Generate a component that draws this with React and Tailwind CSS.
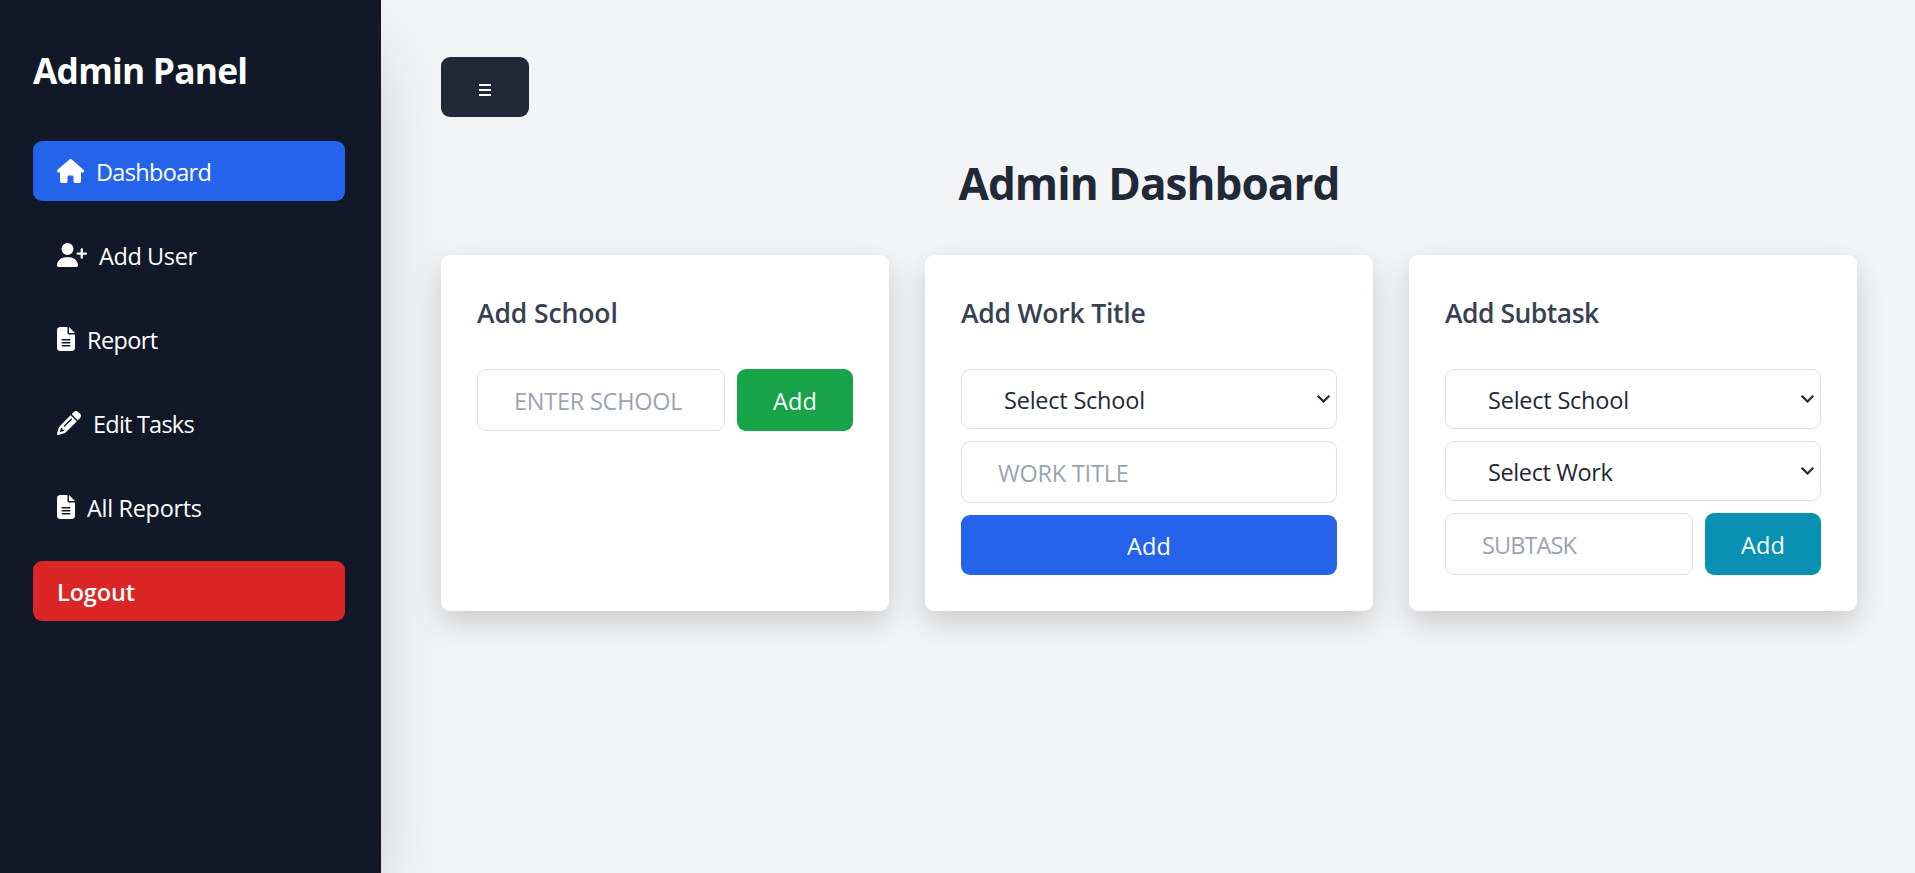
import React from "react";
import { FaHouse, FaUserPlus, FaFileLines, FaPencil } from "react-icons/fa6";

const navItems = [
  { label: "Dashboard", Icon: FaHouse, size: "w-[27px]", tracking: "tracking-[-0.68px]", active: true },
  { label: "Add User", Icon: FaUserPlus, size: "w-[30px]", tracking: "tracking-[-0.4px]" },
  { label: "Report", Icon: FaFileLines, size: "w-[18px]", tracking: "tracking-[-0.6px]" },
  { label: "Edit Tasks", Icon: FaPencil, size: "w-6", tracking: "tracking-[-0.78px]" },
  { label: "All Reports", Icon: FaFileLines, size: "w-[18px]", tracking: "tracking-[-0.32px]" },
];

function NavItem({ label, Icon, size, tracking, active }) {
  return (
    <a
      href="#"
      className={`flex h-15 items-center gap-3 rounded-[9px] px-6 text-white ${active ? "bg-[#2563eb]" : ""}`}
    >
      <Icon className={`h-6 shrink-0 ${size}`} />
      <span className={`pt-0.5 ${tracking}`}>{label}</span>
    </a>
  );
}

function Card({ title, tracking, children }) {
  return (
    <section className="h-[356px] rounded-[9px] bg-white p-9 shadow-[0_12px_30px_rgba(0,0,0,0.17)]">
      <h2 className={`mb-9 flex h-[42px] items-center pt-0.5 text-[26.5px] font-semibold text-[#374151] ${tracking}`}>
        {title}
      </h2>
      <div className="flex flex-col gap-3">{children}</div>
    </section>
  );
}

function Field({ placeholder, className }) {
  return (
    <input
      placeholder={placeholder}
      className={`h-[62px] min-w-0 rounded-[9px] border border-[#dee2e6] bg-white px-9 pt-0.5 uppercase placeholder:text-[#9ca3af] placeholder:opacity-100 ${className}`}
    />
  );
}

function Select({ label, tracking }) {
  return (
    <button className="flex h-15 w-full items-center justify-between rounded-[9px] border border-[#dee2e6] bg-white pr-[5px] pl-[42px] text-[#1f2937]">
      <span className={`pt-0.5 ${tracking}`}>{label}</span>
      <svg viewBox="0 0 15 10" className="h-2.5 w-[15px]" fill="none" stroke="currentColor" strokeWidth="2.2">
        <path d="M1.7 1.7 L7.5 7.5 L13.3 1.7" />
      </svg>
    </button>
  );
}

function AddButton({ className }) {
  return (
    <button
      className={`flex items-center justify-center rounded-[9px] pt-0.5 tracking-[0.2px] text-white ${className}`}
    >
      Add
    </button>
  );
}

export default function App() {
  return (
    <div className="flex h-screen overflow-hidden bg-[#f3f4f6] font-['Open_Sans','Noto_Sans',sans-serif] text-[23.5px] leading-9">
      <aside className="flex w-[381px] shrink-0 flex-col bg-[#111827] pt-12 pr-9 pl-[33px] shadow-[0_37.5px_75px_-18px_rgba(0,0,0,0.25)]">
        <h1 className="mb-[45px] h-12 text-[35.3px] leading-[45px] font-bold tracking-[-0.78px] text-white">Admin Panel</h1>
        <nav className="flex flex-col gap-6">
          {navItems.map((item) => (
            <NavItem key={item.label} {...item} />
          ))}
          <button className="flex h-15 items-center rounded-[9px] bg-[#dc2626] px-6 pt-0.5 font-semibold tracking-[-0.12px] text-white">
            Logout
          </button>
        </nav>
      </aside>

      <main className="flex-1 pt-[57px] pr-[58px] pl-[60px]">
        <button className="flex h-15 w-22 items-center justify-center rounded-[9px] bg-[#1f2937] text-white">
          <svg viewBox="0 0 12 12" className="mt-1.5 h-3 w-3" fill="currentColor">
            <path d="M0 0h12v2H0zM0 5h12v2H0zM0 10h12v2H0z" />
          </svg>
        </button>
        <h1 className="mt-9 mb-9 h-[66px] text-center text-[44.1px] leading-[60px] font-bold tracking-[-0.96px] text-[#1f2937]">
          Admin Dashboard
        </h1>
        <div className="grid grid-cols-3 gap-9">
          <Card title="Add School" tracking="tracking-[-0.1px]">
            <div className="flex gap-3">
              <Field placeholder="ENTER SCHOOL" className="flex-1 tracking-[-0.24px]" />
              <AddButton className="w-29 bg-[#16a34a]" />
            </div>
          </Card>
          <Card title="Add Work Title" tracking="tracking-[-0.22px]">
            <Select label="Select School" tracking="tracking-[-0.22px]" />
            <Field placeholder="WORK TITLE" className="w-full tracking-[-0.22px]" />
            <AddButton className="h-15 w-full bg-[#2563eb]" />
          </Card>
          <Card title="Add Subtask" tracking="tracking-[-0.5px]">
            <Select label="Select School" tracking="tracking-[-0.22px]" />
            <Select label="Select Work" tracking="tracking-[-0.38px]" />
            <div className="flex gap-3">
              <Field placeholder="SUBTASK" className="flex-1 tracking-[-0.88px]" />
              <AddButton className="w-29 bg-[#0891b2]" />
            </div>
          </Card>
        </div>
      </main>
    </div>
  );
}
